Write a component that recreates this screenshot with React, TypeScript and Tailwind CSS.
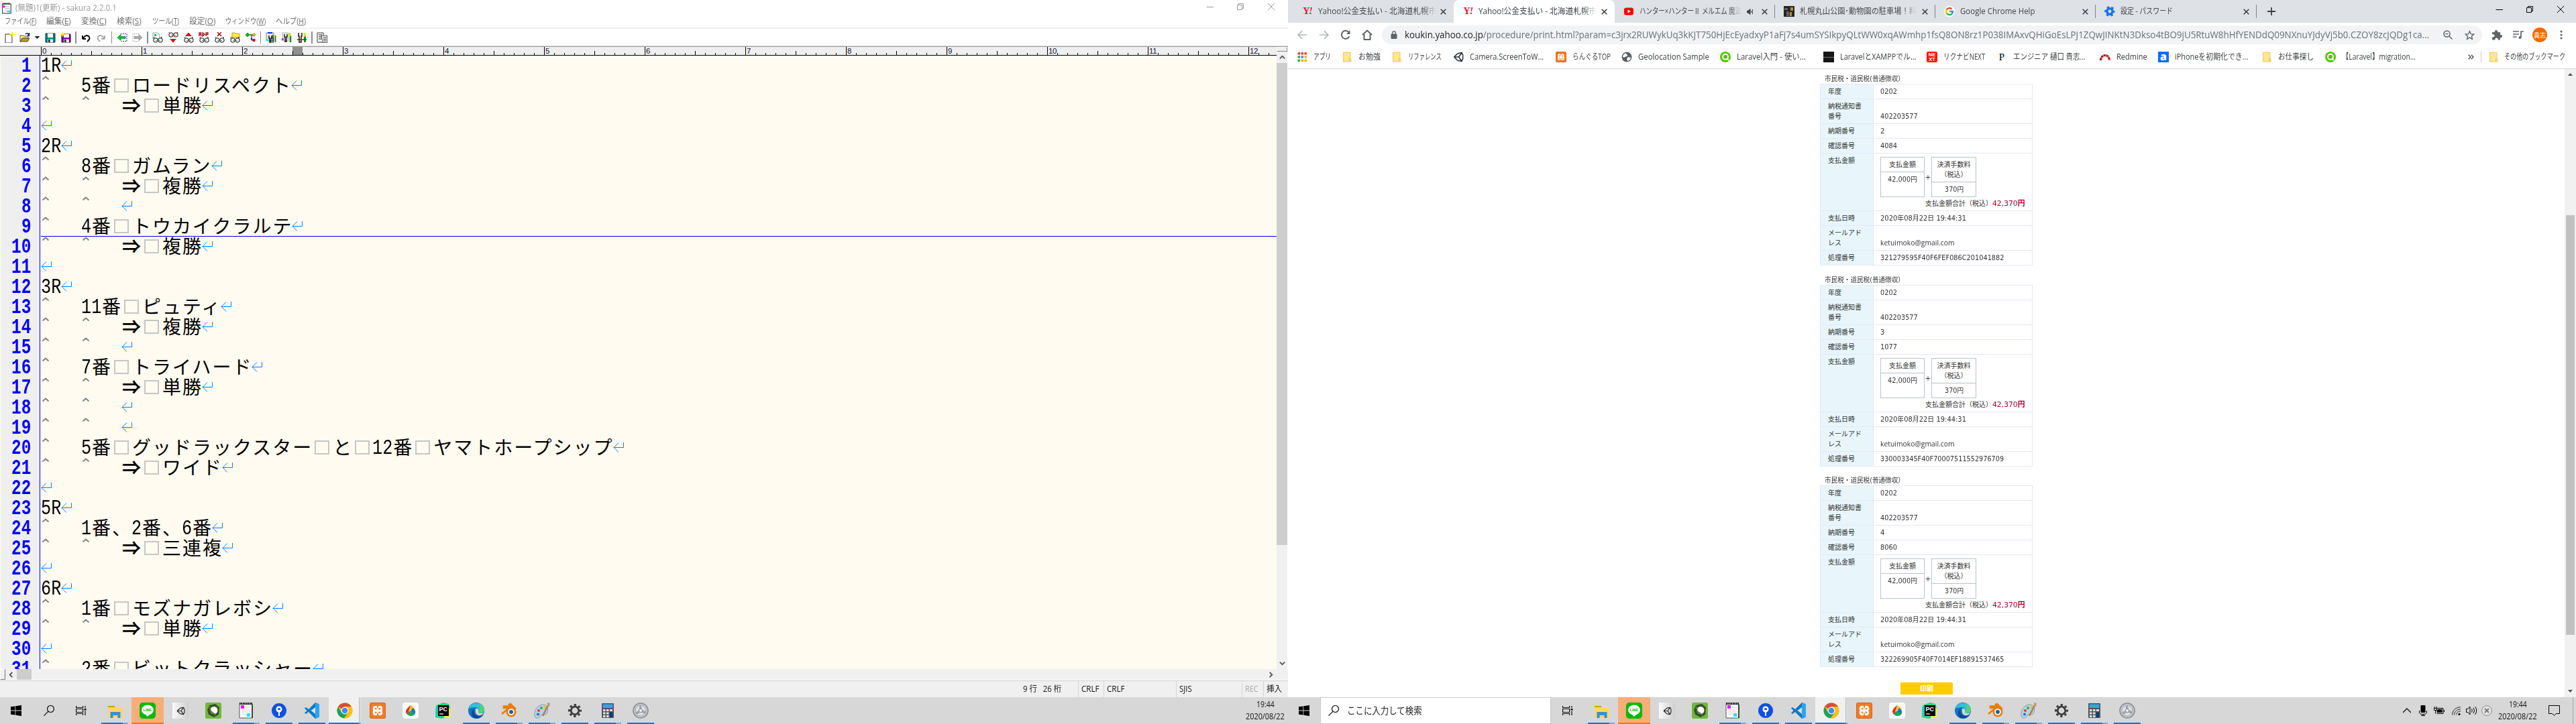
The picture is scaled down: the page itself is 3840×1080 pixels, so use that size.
import { useLayoutEffect, useRef, useState } from "react";
import type { ReactNode } from "react";

/* Text squeezed or stretched horizontally to a known width. */
function Fit({ w, className = "", children }: { w: number; className?: string; children: ReactNode }) {
  const ref = useRef<HTMLSpanElement>(null);
  const [k, setK] = useState(1);
  useLayoutEffect(() => {
    if (ref.current) setK(w / ref.current.offsetWidth);
  }, [w]);
  return (
    <span className={"inline-flex shrink-0 whitespace-nowrap align-top " + className} style={{ width: w }}>
      <span ref={ref} className="block shrink-0 origin-left whitespace-pre" style={{ transform: `scaleX(${k})` }}>
        {children}
      </span>
    </span>
  );
}

const UI = "font-['Open_Sans','Noto_Sans_CJK_JP',sans-serif]";

/* ---------- editor ---------- */

const LINES = [
  "1R", "\t5番□ロードリスペクト", "\t\t⇒□単勝", "", "2R", "\t8番□ガムラン", "\t\t⇒□複勝", "\t\t",
  "\t4番□トウカイクラルテ", "\t\t⇒□複勝", "", "3R", "\t11番□ピュティ", "\t\t⇒□複勝", "\t\t",
  "\t7番□トライハード", "\t\t⇒□単勝", "\t\t", "\t\t", "\t5番□グッドラックスター□と□12番□ヤマトホープシップ",
  "\t\t⇒□ワイド", "", "5R", "\t1番、2番、6番", "\t\t⇒□三連複", "", "6R", "\t1番□モズナガレボシ",
  "\t\t⇒□単勝", "", "\t2番□ビットクラッシャー",
];

function Half({ text }: { text: string }) {
  return (
    <Fit w={text.length * 15} className="h-[30px] font-['Liberation_Mono',monospace] text-[32px] leading-[32px]">
      {text}
    </Fit>
  );
}

function Line({ text, current }: { text: string; current: boolean }) {
  const parts = text.match(/\t|□|⇒|[0-9R]+|[^\t□⇒0-9R]+/g) ?? [];
  return (
    <div className={"flex h-[30px] shrink-0 " + (current ? "shadow-[inset_0_-1px_0_#0000ff]" : "")}>
      {parts.map((p, i) => {
        if (p === "\t")
          return (
            <svg key={i} className="h-[30px] w-[60px] shrink-0" viewBox="0 0 60 30" fill="none" stroke="#808080" strokeWidth="1.9">
              <path d="M2.500 5.500 L7 1.500 L11.500 5.500" />
            </svg>
          );
        if (p === "□")
          return (
            <span key={i} className="flex h-[30px] w-[30px] shrink-0 items-center justify-center pr-px pb-px">
              <span className="h-[21px] w-[22px] border-2 border-[#c6c6c6]" />
            </span>
          );
        if (/^[0-9R]/.test(p)) return <Half key={i} text={p} />;
        return (
          <span
            key={i}
            className={
              "h-[30px] shrink-0 whitespace-nowrap pl-px font-['Noto_Sans_CJK_JP',sans-serif] text-[28px] leading-[26px] tracking-[2px] " +
              (p === "⇒" ? "w-[30px] font-bold" : "-mr-px")
            }
          >
            {p}
          </span>
        );
      })}
      <svg className="h-[30px] w-[17px] shrink-0" viewBox="0 0 17 30" fill="none" stroke="#0080ff">
        <path d="M15.500 7v7.500H1M8 7.500 1 14.500 8 21.500" />
      </svg>
    </div>
  );
}

function Ruler() {
  return (
    <div className="flex h-[13px] overflow-hidden border-b border-black bg-[#efefef]">
      <div className="w-[61px] shrink-0 bg-[#efefef]" />
      {Array.from({ length: 123 }, (_, i) => (
        <div key={i} className={"relative flex w-[15px] shrink-0 items-end " + (i === 25 ? "bg-[#909090]" : "")}>
          <div className={"w-px bg-black " + (i % 10 === 0 ? "h-[12px]" : i % 5 === 0 ? "h-[6px]" : "h-[3px]")} />
          {i % 10 === 0 && (
            <span className="absolute left-[2px] top-0 font-['Liberation_Sans_Narrow','Liberation_Sans',sans-serif] text-[11.5px] leading-[13px] tracking-[-0.4px] text-[#101030]">
              {i / 10}
            </span>
          )}
        </div>
      ))}
    </div>
  );
}

const MENU: [string, string, number, string][] = [
  ["ファイル", "F", 47, "mr-[15px]"], ["編集", "E", 37, "mr-[15px]"], ["変換", "C", 38, "mr-[15px]"], ["検索", "S", 37, "mr-[15.5px]"],
  ["ツール", "T", 40, "mr-[15.5px]"], ["設定", "O", 39, "mr-[15px]"], ["ウィンドウ", "W", 60, "mr-[15px]"], ["ヘルプ", "H", 45, ""],
];

const Eyes = () => (
  <g fill="#fff" stroke="#000" strokeWidth="1">
    <circle cx="5" cy="12" r="3.2" />
    <circle cx="12" cy="12" r="3.2" />
    <path d="M6 12v1M11 12v1M1.5 9l2-2M15 9l-2-2" />
  </g>
);

const TOOLS: Record<string, ReactNode> = {
  new: <><path d="M2 3h7l3 3v10H2z" fill="#fff" stroke="#333" /><path d="M12.500 0v7M9 3.500h7" stroke="#ffe600" strokeWidth="1.500" /></>,
  open: <><path d="M1 5h5l1 1h6v3H5l-3 5H1z" fill="#fff27a" stroke="#555" /><path d="M4 9h11l-3 5H1z" fill="#b8a21c" stroke="#444" /><path d="M9 3q3-3 5 1M14.500 1v4h-3" fill="none" stroke="#00106a" strokeWidth="1.300" /></>,
  save: <><path d="M1 2h14v13H1z" fill="#008080" stroke="#003b3b" /><path d="M4 2h8v6H4z" fill="#fff" /><path d="M4 10.500h8v4.500H4z" fill="#d9f0f0" /><path d="M5 11h2.500v4H5z" fill="#222" /></>,
  saveas: <><path d="M2 3h13v12H2z" fill="#800080" stroke="#330033" /><path d="M5 3h8v5H5z" fill="#fff" /><path d="M5 10.500h8v4.500H5z" fill="#eee" /><path d="M6 11h2.500v4H6z" fill="#222" /><path d="M3.500 0v7M0 3.500h7M1 1l5 5M6 1 1 6" stroke="#ffe600" /></>,
  undo: <path d="M3 10V5M3 10h5M3.500 9.500Q8 3 12 6t-2 8" fill="none" stroke="#000" strokeWidth="2" />,
  redo: <path d="M13 10V5M13 10H8M12.500 9.500Q8 3 4 6t2 8" fill="none" stroke="#aaa" strokeWidth="2" />,
  back: <><path d="M6 2.500h9v11H7" fill="none" stroke="#000" strokeDasharray="1.500 1.500" /><path d="M1 8l5-4.500v3h7v3H6v3z" fill="#00d000" stroke="#064" strokeWidth=".7" /></>,
  fwd: <><path d="M10 2.500H1v11h8" fill="none" stroke="#999" strokeDasharray="1.500 1.500" /><path d="M15 8l-5-4.500v3H3v3h7v3z" fill="#aaa" stroke="#888" strokeWidth=".7" /></>,
  find: <><path d="M1 1h7l3 3v6H1z" fill="#fff" stroke="#999" /><path d="M3 3h3v3H3z" fill="#00c040" /><Eyes /></>,
  down: <><g transform="translate(0,-8)"><Eyes /></g><path d="M3 10h10l-5 5.500z" fill="#e00000" /></>,
  up: <><path d="M3 6h10L8 .5z" fill="#e00000" /><Eyes /></>,
  rep: <><path d="M1 6V1h2.500v2.500H1M3 3.500 4 6M6 .8 9 3.300 6 6zM11 6V1h3v2.500h-3" fill="none" stroke="#a00010" strokeWidth="1.300" /><Eyes /></>,
  clear: <><path d="M5 0l6 6M11 0 5 6" stroke="#b00010" strokeWidth="1.500" /><Eyes /></>,
  grep: <><path d="M4 3V1h4l1 1h6v6H4z" fill="#ffe94a" stroke="#d0a000" /><Eyes /></>,
  tree: <><path d="M4 4h6v8h3M10 4h3" fill="none" stroke="#000" /><path d="M4 .5 7.500 4 4 7.500.5 4z" fill="#00b000" /><circle cx="13.500" cy="4" r="2" fill="#ffe000" stroke="#000" strokeWidth=".5" /><circle cx="13.500" cy="12" r="2.200" fill="#d00000" /><circle cx="10" cy="10" r="1.300" fill="#1010c0" /></>,
  cfg1: <><path d="M1 1h11v12H1z" fill="#e8e8e8" stroke="#888" /><path d="M3 1h7" stroke="#1030ff" strokeWidth="2" /><path d="M5 5v4h1v6h2V9h1V5M11 4v12" fill="none" stroke="#111" strokeWidth="1.500" /><path d="M14.500 5v10" stroke="#109020" strokeWidth="2" /><path d="M12.500 4v4" stroke="#e0d000" strokeWidth="2" /><path d="M1 10h3v3H1z" fill="#0ff" /></>,
  cfg2: <><path d="M2 1h9v12H2z" fill="#f4f4f4" stroke="#aaa" /><path d="M5 3v4h1v7h2V7h1V3" fill="none" stroke="#111" strokeWidth="1.400" /><path d="M14 5v10" stroke="#109020" strokeWidth="2.500" /><path d="M13 1v5" stroke="#e8da00" strokeWidth="3" /><path d="M1 9h3v3H1z" fill="#f0f" /></>,
  cfg3: <><path d="M3 1v5h1v9h3V6h1V1" fill="#eee" stroke="#111" strokeWidth="1.400" /><path d="M12.500 5v10" stroke="#109020" strokeWidth="3" /><path d="M12 1v6" stroke="#e8da00" strokeWidth="3" /><path d="M1 11h14M4 9v4" stroke="#a01010" strokeWidth="1.500" /></>,
  outline: <><path d="M1 1h9v14H1z" fill="#fff" stroke="#333" /><path d="M3 4h5M3 7h5M3 10h5" stroke="#000" /><path d="M7 5h8.500v10.500H9z" fill="#eee" stroke="#555" /><path d="M10 8h4M10 10.500h4M10 13h4" stroke="#333" /></>,
};

const TOOL_GROUPS = [["undo", "redo"], ["back", "fwd"], ["find", "down", "up", "rep", "clear", "grep", "tree"], ["cfg1", "cfg2", "cfg3"], ["outline"]];

function Tool({ id }: { id: string }) {
  return (
    <span className="flex w-[23px] shrink-0 justify-center">
      <svg className="h-4 w-4" viewBox="0 0 16 16">{TOOLS[id]}</svg>
    </span>
  );
}

function WindowButtons({ color }: { color: string }) {
  return (
    <div className={"flex items-center " + color}>
      <svg className="h-3 w-3" viewBox="0 0 12 12" stroke="currentColor"><path d="M.5 6.500h10.500" /></svg>
      <svg className="ml-[33px] h-3 w-3" viewBox="0 0 12 12" fill="none" stroke="currentColor"><path d="M1.500 3.500h7v7h-7zM3.500 3V1.500h7v7H9" /></svg>
      <svg className="ml-[34px] h-3 w-3" viewBox="0 0 12 12" stroke="currentColor"><path d="M.8.800 11.200 11.200M11.200.800.800 11.200" /></svg>
    </div>
  );
}

function Chevron({ d, className }: { d: string; className: string }) {
  return (
    <svg className={className} viewBox="0 0 10 10" fill="none" stroke="#505050" strokeWidth="2"><path d={d} /></svg>
  );
}

const STATUS: [string, number, string, string][] = [
  ["CRLF", 26, "w-[38px]", "text-[#111]"], ["CRLF", 26, "w-[108px]", "text-[#111]"], ["SJIS", 19, "w-[98px]", "text-[#111]"],
  ["REC", 20, "w-[32px]", "text-[#a8a8a8]"], ["挿入", 23, "w-[37px]", "text-[#111]"],
];

function Editor() {
  return (
    <section className={"flex h-[1040px] w-[1920px] flex-col bg-white " + UI}>
      <div className="flex h-[23px] items-center pl-[3px] pr-[19px]">
        <svg className="mt-px h-[17px] w-[14px]" viewBox="0 0 14 17">
          <path d="M.7 2h12.500v14H.7z" fill="#fff" stroke="#222" />
          <path d="M1 1.200h12" stroke="#000" strokeWidth="2" strokeDasharray="1 1" />
          <path d="M4 6h7M4 8.500h7M4 11h4" stroke="#bbb" />
          <path d="M2 3l3 3-2 2-2-2z" fill="#f0f" />
          <path d="M7 12h3v-2l3 3-3 3v-2H7z" fill="#0ee" />
        </svg>
        <Fit w={151} className="ml-[6px] text-[12px] leading-[18px] text-[#999]">(無題)1(更新) - sakura 2.2.0.1</Fit>
        <div className="-mt-1 ml-auto"><WindowButtons color="text-[#999]" /></div>
      </div>
      <div className="flex h-[18px] items-center pl-[7px] text-[12px] leading-[18px] text-[#6d6d6d]">
        {MENU.map(([t, k, w, m]) => (
          <Fit key={t} w={w} className={m}>{t}(<span className="underline">{k}</span>)</Fit>
        ))}
      </div>
      <div className="h-[2px] bg-[#f0f0f0]" />
      <div className="flex h-[25px] items-center pl-[2px] pt-px">
        <Tool id="new" />
        <Tool id="open" />
        <svg className="mx-[3px] h-2 w-[9px] shrink-0" viewBox="0 0 9 8"><path d="M.5 2h8l-4 4z" fill="#222" /></svg>
        <Tool id="save" />
        <Tool id="saveas" />
        {TOOL_GROUPS.map((g, i) => (
          <div key={i} className="flex items-center">
            <span className="mx-[3px] h-[18px] w-[1.500px] bg-[#8c8c8c]" />
            {g.map((t) => <Tool key={t} id={t} />)}
          </div>
        ))}
      </div>
      <div className="h-px bg-[#dcdcdc]" />
      <div className="h-px bg-[#989898]" />
      <div className="flex h-[928px] border-l border-[#989898]">
        <div className="-ml-px flex w-[1903px] flex-col overflow-hidden">
          <Ruler />
          <div className="flex h-[915px] overflow-hidden bg-[#fffbf0]">
            <div className="ml-px flex w-[58px] shrink-0 flex-col items-end bg-[#efefef] pr-[13px] text-[#0000ff]">
              {LINES.map((_, i) => (
                <Fit key={i} w={String(i + 1).length * 14.5} className="h-[30px] font-['Liberation_Mono',monospace] text-[32px] font-bold leading-[32px]">
                  {i + 1}
                </Fit>
              ))}
            </div>
            <div className="w-px shrink-0 bg-[#0000ff]" />
            <div className="flex flex-1 flex-col pl-px text-black">
              {LINES.map((l, i) => <Line key={i} text={l} current={i === 8} />)}
            </div>
          </div>
        </div>
        <div className="flex w-[16px] flex-col items-center bg-[#f0f0f0]">
          <div className="h-[7px] w-full border border-[#888] border-l-white border-t-white bg-[#f0f0f0]" />
          <Chevron d="M1 7 5 3l4 4" className="my-[4px] h-[9px] w-[9px]" />
          <div className="h-[719px] w-full bg-[#cdcdcd]" />
          <Chevron d="M1 3 5 7l4-4" className="mb-1 mt-auto h-[9px] w-[9px]" />
        </div>
      </div>
      <div className="flex h-[17px] items-center border-b border-white bg-[#f0f0f0]">
        <div className="h-full w-[8px] border border-[#777] border-l-white border-t-white" />
        <Chevron d="M7 1 3 5l4 4" className="ml-[4px] h-[9px] w-[9px]" />
        <div className="ml-[4px] h-full w-[22px] bg-[#cdcdcd]" />
        <Chevron d="M3 1l4 4-4 4" className="ml-auto mr-[21px] h-[9px] w-[9px]" />
      </div>
      <div className="flex flex-1 items-stretch border-t border-[#d0d0d0] bg-[#f0f0f0] text-[12px] leading-[24px] text-[#111]">
        <div className="w-[1607px] pl-[1525px]">
          <Fit w={57}>9 行   26 桁</Fit>
        </div>
        {STATUS.map(([t, w, cell, color], i) => (
          <div key={i} className={"border-l border-[#d4d4d4] pl-[4px] " + cell + " " + color}><Fit w={w}>{t}</Fit></div>
        ))}
      </div>
    </section>
  );
}

/* ---------- shared logos ---------- */

const Xampp = () => (
  <svg viewBox="0 0 24 24" className="h-full w-full">
    <rect width="24" height="24" rx="3" fill="#d9601a" /><rect x="1" y="1" width="22" height="22" rx="2" fill="#f27b26" />
    <g fill="none" stroke="#fff" strokeWidth="3">
      <path d="M12 12H8.500a2.900 2.900 0 1 1 3.500-3.200zM12 12h3.500a2.900 2.900 0 1 0-3.500-3.200zM12 12H8.500a2.900 2.900 0 1 0 3.500 3.200zM12 12h3.500a2.900 2.900 0 1 1-3.500 3.200z" />
    </g>
    <path d="M12 4.500v3.500M12 16v3.500" stroke="#f27b26" strokeWidth="2" />
  </svg>
);
const UnityMark = ({ color }: { color: string }) => (
  <svg viewBox="0 0 24 24" className="h-full w-full" fill="none" stroke={color} strokeWidth="2.200">
    <path d="M2 12 11 4M2 12l9 8M2 12h11M13 12l6-9M13 12l6 9M11 4l8.500-1.500L22 8v8l-2.500 5.500L11 20" />
  </svg>
);
const Chrome = () => (
  <svg viewBox="0 0 24 24" className="h-full w-full">
    <circle cx="12" cy="12" r="11.500" fill="#fbc116" />
    <path d="M12 12 2 6.300A11.500 11.500 0 0 1 22 6.300H12z" fill="#dd4b3e" />
    <path d="M2 6.300A11.500 11.500 0 0 0 11 23.500L17 15 7 14.500z" fill="#1aa260" />
    <path d="M12 6.500h10A11.500 11.500 0 0 1 11 23.500l6-9z" fill="#fbc116" />
    <circle cx="12" cy="12" r="5.400" fill="#fff" /><circle cx="12" cy="12" r="4.300" fill="#4688f4" />
  </svg>
);
const Folder = () => (
  <svg viewBox="0 0 16 16" className="h-full w-full"><path d="M2.500 1h10.500v9l1 1.500V15H2.500z" fill="#ffe694" stroke="#e8c860" /><path d="M11.500 14.500v-4h1.500" fill="none" stroke="#e8c04c" /></svg>
);
const Green = () => (
  <svg viewBox="0 0 16 16" className="h-full w-full"><circle cx="8" cy="8" r="8" fill="#55c500" /><circle cx="8" cy="7.800" r="4" fill="none" stroke="#fff" strokeWidth="2" /><path d="M10 10l3 3" stroke="#fff" strokeWidth="2" /></svg>
);

/* ---------- taskbar ---------- */

const WinLogo = () => (
  <svg viewBox="0 0 16 16" className="h-4 w-4"><path d="M0 2.300 6.500 1.400v6.200H0zM7.300 1.300 16 0v7.600H7.300zM0 8.400h6.500v6.200L0 13.700zM7.300 8.400H16V16l-8.700-1.300z" /></svg>
);
const Search = () => (
  <svg viewBox="0 0 16 16" className="h-4 w-4" fill="none" stroke="#111" strokeWidth="1.200"><circle cx="10.500" cy="5.500" r="5" /><path d="M7 9.200.5 15.700" /></svg>
);
const TaskView = () => (
  <svg viewBox="0 0 16 16" className="h-4 w-4" fill="none" stroke="#111" strokeWidth="1.200"><path d="M.6 1v2.500h10V1M.6 15v-2.500h10V15M.6 5.500h10v5H.6zM14 1v3M14 8.500V15" /><path d="M12.500 5h3v2.500h-3z" fill="#111" stroke="none" /></svg>
);

const APPS: { icon: ReactNode; bar: string }[] = [
  {
    bar: "full-orange",
    icon: <svg viewBox="0 0 24 24" className="h-6 w-6"><rect width="24" height="24" rx="5" fill="#00b900" /><ellipse cx="12" cy="11" rx="9" ry="7.500" fill="#fff" /><path d="M8 17l4 4 4-4z" fill="#fff" /><text x="12" y="13" fontSize="5.500" fontWeight="bold" textAnchor="middle" fill="#00b900" fontFamily="Liberation Sans">LINE</text></svg>,
  },
  { bar: "", icon: <span className="flex h-6 w-6 items-center justify-center bg-gradient-to-r from-[#fafafa] to-[#cfcfcf]"><span className="h-[13px] w-[13px]"><UnityMark color="#222" /></span></span> },
  { bar: "", icon: <svg viewBox="0 0 24 24" className="h-6 w-6"><rect width="24" height="24" rx="2.500" fill="#72b83c" /><path d="M6 4l9-2 6 5-1 11-7 4-8-4-2-7z" fill="#35502c" /><circle cx="13" cy="11.500" r="5.500" fill="#fff" /><path d="M6 5l2 8 8 6" fill="none" stroke="#4c7a34" strokeWidth="2" /></svg> },
  { bar: "split", icon: <svg viewBox="0 0 24 24" className="h-6 w-6"><path d="M2 2.500h19V23H2z" fill="#fff" stroke="#555" /><path d="M2 1.500h19" stroke="#000" strokeWidth="3" strokeDasharray="1.500 1" /><path d="M21 3v20" stroke="#222" strokeWidth="1.500" /><path d="M10 7h8M5 11h13M5 14h13M5 17h6" stroke="#ccc" /><path d="M4 4h5v5H4zM5 9h4" fill="#f0f" /><path d="M13 16h5v5h-5z" fill="#0ee" /></svg> },
  { bar: "solid", icon: <svg viewBox="0 0 24 24" className="h-6 w-6"><circle cx="12" cy="12" r="11" fill="#0b52e0" /><circle cx="12" cy="10" r="4.500" fill="#fff" /><circle cx="12" cy="10" r="2" fill="#0b52e0" /><path d="M12 11v9" stroke="#fff" strokeWidth="2" /></svg> },
  { bar: "solid", icon: <svg viewBox="0 0 24 24" className="h-6 w-6"><path d="M17 0 7 10 3 7 1 8.500 4.500 12 1 15.500 3 17l4-3 10 10 6-2.500v-19z" fill="#0a79c8" /><path d="M17 0v24l6-2.500v-19z" fill="#2aa4f0" /><path d="M17 7v10l-6.500-5z" fill="#dedede" /></svg> },
  { bar: "chrome", icon: <span className="h-6 w-6"><Chrome /></span> },
  { bar: "", icon: <span className="h-6 w-6"><Xampp /></span> },
  { bar: "", icon: <svg viewBox="0 0 24 24" className="h-6 w-6"><rect width="24" height="24" rx="4" fill="#fafafa" /><path d="M12 4C7 8 5 11 5 14a7 7 0 0 0 4 5z" fill="#f02a20" /><path d="M9 19C5 16 11 11 18 11c3 4 0 9-5 9-2 0-3-.3-4-1z" fill="#14a860" /><path d="M12 4c4 2 6 4 7 8-6-3-9 0-11 4z" fill="#f8c020" /><path d="M15 8c3 2 5 5 3 9l-5-5z" fill="#1870d8" /></svg> },
  { bar: "", icon: <svg viewBox="0 0 24 24" className="h-6 w-6"><path d="M1 4 12 0l8 2 3 8-2 12-12 2-9-2z" fill="#21d789" /><path d="M14 5l9 4-1 13-9 2z" fill="#e9f04a" /><path d="M0 22V8l5-4z" fill="#07c3f2" opacity=".5" /><rect x="4" y="4" width="16" height="16" fill="#000" /><text x="5.500" y="13" fontSize="9" fontWeight="bold" fill="#fff" fontFamily="Liberation Sans">PC</text><path d="M6 17h6" stroke="#fff" strokeWidth="1.300" /></svg> },
  { bar: "solid", icon: <svg viewBox="0 0 24 24" className="h-6 w-6"><circle cx="12" cy="12" r="12" fill="#1172c8" /><path d="M1 9C3-1 20-3 24 9c1 5-3 8-9 6 2-5-1-8-5-8S3 8 1 9z" fill="#2fc3d4" /><path d="M17 2c5 2 8 8 6 11-2 4-7 3-8 2 4-5 3-9 2-13z" fill="#58d26a" /><path d="M9 10c-2 5 2 11 9 10l4-1c-6 7-16 6-17-2-.5-4 1-6 4-7z" fill="#0b4a94" /><path d="M11 9c5-1 5 4 4 6 3 2 6 1 8-.5C22 19 15 21 12 17c-2-3-1-6-1-8z" fill="#d6d6d6" /></svg> },
  { bar: "split", icon: <svg viewBox="0 0 24 24" className="h-6 w-6"><path d="M1 17 12 8H4V5.500h10L12 3l2-1 8 8" fill="none" stroke="#e87d0d" strokeWidth="2.600" /><circle cx="15" cy="14" r="7.500" fill="#e87d0d" /><circle cx="15" cy="14" r="4.800" fill="#fff" /><circle cx="15" cy="14" r="3" fill="#225f9c" /></svg> },
  { bar: "split", icon: <svg viewBox="0 0 24 24" className="h-6 w-6"><path d="M2 22C-2 15 4 4 13 3c6 0 9 5 7 11-2 7-6 2-9 4-2 4-6 7-9 4z" fill="#b4d3e4" stroke="#7aa0b6" /><circle cx="7" cy="12" r="2" fill="#e04030" /><circle cx="11" cy="8" r="2" fill="#40a848" /><circle cx="16" cy="7.500" r="1.800" fill="#f0c020" /><circle cx="6" cy="17.500" r="2" fill="#4060c8" /><path d="M22 2 13 20" stroke="#b87a3c" strokeWidth="2.400" /><path d="M20 0l4 1-1 5-3-1z" fill="#c99a62" /></svg> },
  { bar: "solid", icon: <svg viewBox="0 0 24 24" className="h-6 w-6"><circle cx="12" cy="12" r="8.500" fill="none" stroke="#3c3c3c" strokeWidth="3" strokeDasharray="3.340 3.340" strokeDashoffset="1.670" /><circle cx="12" cy="12" r="5.800" fill="none" stroke="#3c3c3c" strokeWidth="2.800" /></svg> },
  { bar: "split", icon: <svg viewBox="0 0 24 24" className="h-6 w-6"><rect x="3" y="1" width="18" height="22" rx="1" fill="#4d5560" /><path d="M4.500 2.500h15V8h-15z" fill="#2ea8e8" /><path d="M5 10h3.500v3H5zM10 10h3.500v3H10zM5 14.500h3.500v3H5zM10 14.500h3.500v3H10zM5 19h3.500v3H5zM10 19h3.500v3H10z" fill="#dfe3e8" /><path d="M15 10h4v3h-4z" fill="#dfe3e8" /><path d="M15 14.500h4V22h-4z" fill="#0b3c74" /></svg> },
  { bar: "solid", icon: <svg viewBox="0 0 24 24" className="h-6 w-6"><circle cx="12" cy="12" r="11" fill="#c4c8cb" stroke="#868b90" strokeWidth="1.500" /><circle cx="12" cy="12" r="8" fill="#dcdfe1" stroke="#a3a8ac" /><path d="M12 12C9 8 10 5 12 4c2 2 2 5 0 8zM12 12c5-1 8 1 7.500 4-3 1-6-1-7.500-4zM12 12c-2 5-5 6-7.500 4 1-3 4-4 7.500-4z" fill="#9aa0a5" /><circle cx="12" cy="12" r="2.600" fill="#f5f5f5" stroke="#7e848a" /></svg> },
];

function Bar({ kind }: { kind: string }) {
  if (kind === "full-orange") return <div className="absolute bottom-0 left-0 h-[2px] w-[48px] bg-[#ff7200]" />;
  if (kind === "chrome") return <div className="absolute bottom-0 left-0 flex h-[2px] w-[48px] bg-[#0078d7]"><div className="ml-auto w-[3px] bg-[#5aa9e6]" /></div>;
  if (kind === "split") return <div className="absolute bottom-0 left-[4px] flex h-[2px] w-[40px] bg-[#0078d7]"><div className="ml-auto w-[8px] bg-[#66b0ea]" /></div>;
  if (kind === "solid") return <div className="absolute bottom-0 left-[4px] h-[2px] w-[40px] bg-[#0078d7]" />;
  return null;
}

function Apps() {
  return (
    <div className="flex">
      <div className="relative flex h-[40px] w-[49px] items-center justify-center">
        <svg viewBox="0 0 24 24" className="mt-px h-6 w-6">
          <path d="M1 4h10v3H1z" fill="#d69a12" /><path d="M1 6h22v15H1z" fill="#ffd666" /><path d="M4.500 22v-9h15v9h-4v-4h-7v4z" fill="#3a8fd0" />
        </svg>
        <Bar kind="split" />
      </div>
      {APPS.map((a, i) => (
        <div
          key={i}
          className={
            "relative flex h-[40px] w-[49px] items-center justify-center pr-px " +
            (i === 0 ? "border-r border-[#d7d7d7] bg-[#f7ae78]" : i === 6 ? "border-r-[3px] border-[#dadada] bg-[#f0f0f0] pl-[2px] shadow-[inset_-1px_0_0_#bdbdbd]" : "")
          }
        >
          {a.icon}
          <Bar kind={a.bar} />
        </div>
      ))}
    </div>
  );
}

function Clock() {
  return (
    <div className={"flex flex-col items-center text-[12px] leading-[18px] text-[#111] " + UI}>
      <Fit w={27}>19:44</Fit>
      <Fit w={58}>2020/08/22</Fit>
    </div>
  );
}

function TaskbarLeft() {
  return (
    <div className="flex h-[40px] w-[1920px] items-center bg-[#d7d7d7]">
      <span className="flex w-[49px] justify-center pr-[2px]"><WinLogo /></span>
      <span className="flex w-[49px] justify-center pr-[2px]"><Search /></span>
      <span className="flex w-[49px] justify-center pr-[4px]"><TaskView /></span>
      <Apps />
      <div className="ml-auto mr-[5px]"><Clock /></div>
    </div>
  );
}

function TaskbarRight() {
  return (
    <div className={"flex h-[40px] w-[1920px] items-center bg-[#d7d7d7] " + UI}>
      <span className="flex w-[48px] shrink-0 justify-center"><WinLogo /></span>
      <div className="flex h-[40px] w-[344px] shrink-0 items-center border border-[#c8c8c8] bg-white pl-[11px]">
        <Search />
        <Fit w={112} className="ml-[12px] text-[14px] leading-5 text-[#222]">ここに入力して検索</Fit>
      </div>
      <span className="flex w-[51px] shrink-0 justify-center pr-[2px]"><TaskView /></span>
      <div className="shrink-0"><Apps /></div>
      <div className="ml-auto flex items-center">
        <svg className="h-3 w-3" viewBox="0 0 12 12" fill="none" stroke="#111" strokeWidth="1.300"><path d="M0 9l6-6 6 6" /></svg>
        <svg className="ml-[12px] h-4 w-[12px]" viewBox="0 0 12 16"><rect x="2.500" y="0" width="7" height="11" rx="1" /><path d="M.6 8v3.500l1.800 1.800h7.200l1.800-1.800V8M6 13v2.500M3 15.500h6" fill="none" stroke="#000" /></svg>
        <svg className="ml-[10px] h-3 w-[16px]" viewBox="0 0 16 12"><path d="M4.500 2.500H14v8H4.500M15.500 5v3M1 0v2M4 0v2M.5 2.500h4v3h-4zM2.500 6v4.500" fill="none" stroke="#000" /><path d="M6 4h6.500v5H4.500V7z" /></svg>
        <svg className="ml-[11px] h-[13px] w-[13px]" viewBox="0 0 13 13" fill="none" stroke="#222"><path d="M.5 12.500C.5 6 6 .8 13 .8M3.500 12.500C3.500 8 7.500 4 13 4M6.500 12.500C6.500 9.500 9 7 13 7" /><circle cx="11" cy="11.500" r="1.300" fill="#000" /></svg>
        <svg className="ml-[8px] h-[14px] w-[17px]" viewBox="0 0 17 14" fill="none" stroke="#000"><path d="M.5 4.500h2.500l3-3.500v12l-3-3.500H.5zM8.500 4.500q1.500 2.500 0 5M11 3q3 4 0 8M13.500 1q4.500 6 0 12" /></svg>
        <svg className="ml-[6px] h-4 w-4" viewBox="0 0 16 16" fill="none"><circle cx="8" cy="8" r="7.400" fill="#e4e4e4" stroke="#8a8a8a" /><path d="M5 5l6 6M11 5l-6 6" stroke="#7d7d7d" strokeWidth="2.200" /></svg>
        <div className="ml-[9px]"><Clock /></div>
        <svg className="ml-[17px] h-[16px] w-[17px]" viewBox="0 0 17 16" fill="none" stroke="#000"><path d="M.5.500h16v12h-5l-3 2.800-3-2.800h-5z" /></svg>
        <div className="ml-[19px] mr-[4px] h-[40px] w-px bg-[#a8a8a8]" />
      </div>
    </div>
  );
}

/* ---------- browser ---------- */

const Yahoo = () => <span className="w-4 text-center font-['Liberation_Serif',serif] text-[14px] font-black leading-4 tracking-[-1px] text-[#ff0033]">Y<i>!</i></span>;
const X = () => <svg className="h-[9px] w-[9px] shrink-0" viewBox="0 0 9 9" stroke="#3c4043" strokeWidth="1.600"><path d="M.7.700 8.300 8.300M8.300.700.700 8.300" /></svg>;

const Gear = () => (
  <svg viewBox="0 0 16 16" className="h-4 w-4"><circle cx="8" cy="8" r="4.200" fill="none" stroke="#1a73e8" strokeWidth="3.600" /><circle cx="8" cy="8" r="6.500" fill="none" stroke="#1a73e8" strokeWidth="2.600" strokeDasharray="3.400 3.400" strokeDashoffset="1.700" /></svg>
);
const Google = () => (
  <svg viewBox="0 0 16 16" className="h-4 w-4"><circle cx="8" cy="8" r="8" fill="#fff" /><g fill="none" strokeWidth="2.400"><path d="M11.500 4.500A5 5 0 0 0 3.700 5.500" stroke="#ea4335" /><path d="M3.700 5.500a5 5 0 0 0 0 5" stroke="#fbbc05" /><path d="M3.700 10.500a5 5 0 0 0 7.600 1.300" stroke="#34a853" /><path d="M11.300 11.800A5 5 0 0 0 13 8H8.200" stroke="#4285f4" /></g></svg>
);

function Tab({ icon, title, w, active, audio, sep, fade }: { icon: ReactNode; title: string; w: number; active?: boolean; audio?: boolean; sep?: boolean; fade?: boolean }) {
  return (
    <div className={"relative flex h-[34px] w-[239.300px] shrink-0 items-center pl-[13px] " + (active ? "rounded-t-[8px] bg-white" : "")}>
      {icon}
      <Fit w={w} className={"ml-[8px] text-[12px] leading-[18px] " + (active ? "text-[#3c4043] " : "text-[#45494d] ") + (fade ? "[mask-image:linear-gradient(to_right,black_88%,transparent)]" : "")}>
        {title}
      </Fit>
      <div className="ml-auto mr-[11px] flex items-center gap-[12px]">
        {audio && <svg className="h-[9px] w-[10px]" viewBox="0 0 10 9" fill="none" stroke="#444"><path d="M.3 3H2l3-2.500v8L2 6H.3z" fill="#444" /><path d="M6.500 3v3M8.500 1v7" /></svg>}
        <X />
      </div>
      {sep && <div className="absolute right-0 top-[7px] h-[20px] w-px bg-[#80868b]" />}
    </div>
  );
}

const BOOKMARKS: { icon: ReactNode; t: string; w: number; cell: string }[] = [
  { t: "アプリ", w: 26, cell: "w-[67px]", icon: <svg viewBox="0 0 16 16" className="h-4 w-4"><path d="M1.500 1h3.500v3.500H1.500zM6.500 1H10v3.500H6.500zM11.500 1H15v3.500h-3.500z" fill="#ea4335" /><path d="M1.500 6.200h3.500v3.500H1.500z" fill="#34a853" /><path d="M6.500 6.200H10v3.500H6.500z" fill="#4285f4" /><path d="M11.500 6.200H15v3.500h-3.500zM6.500 11.500H10V15H6.500zM11.500 11.500H15V15h-3.500z" fill="#fbae05" /><path d="M1.500 11.500h3.500V15H1.500z" fill="#34a853" /></svg> },
  { t: "お勉強", w: 33, cell: "w-[74px]", icon: <Folder /> },
  { t: "リファレンス", w: 50, cell: "w-[92px]", icon: <Folder /> },
  { t: "Camera.ScreenToW...", w: 110, cell: "w-[153px]", icon: <UnityMark color="#222c37" /> },
  { t: "らんぐるTOP", w: 57, cell: "w-[98px]", icon: <Xampp /> },
  { t: "Geolocation Sample", w: 106, cell: "w-[147px]", icon: <svg viewBox="0 0 16 16" className="h-4 w-4"><circle cx="8" cy="8" r="7.500" fill="#5a5f64" /><path d="M7 2c-1 2 3 2 2 4s-4 1-5 3l-2-1.500C2 5 4 3 7 2zM10 8l4 1c-.5 3-2.500 4.500-5 5 0-2-2-3 1-6z" fill="#fff" /></svg> },
  { t: "Laravel入門 - 使い...", w: 103, cell: "w-[154px]", icon: <Green /> },
  { t: "LaravelとXAMPPでル...", w: 113, cell: "w-[154px]", icon: <span className="flex h-4 w-4 items-center bg-[#161616]"><span className="h-px w-full bg-[#777]" /></span> },
  { t: "リクナビNEXT", w: 62, cell: "w-[104px]", icon: <svg viewBox="0 0 16 16" className="h-4 w-4"><rect width="16" height="16" rx="2" fill="#ff1100" /><text x="8" y="7.300" fontSize="7.500" fontWeight="bold" textAnchor="middle" fill="#fff" fontFamily="Liberation Sans">NE</text><text x="8" y="14.300" fontSize="7.500" fontWeight="bold" textAnchor="middle" fill="#fff" fontFamily="Liberation Sans">XT</text></svg> },
  { t: "エンジニア 樋口 貴志...", w: 108, cell: "w-[154px]", icon: <span className="block text-center font-['Liberation_Serif',serif] text-[15px] leading-4 text-black">P</span> },
  { t: "Redmine", w: 46, cell: "w-[87px]", icon: <svg viewBox="0 0 16 16" className="h-4 w-4"><path d="M1.500 13A6.500 7.500 0 0 1 14.500 13" fill="none" stroke="#b3161b" strokeWidth="3.200" strokeDasharray="3.600 .6" /></svg> },
  { t: "iPhoneを初期化でき...", w: 109, cell: "w-[154px]", icon: <span className="flex h-4 w-4 items-center justify-center bg-[#0e6bff] pb-[2px] text-[16px] font-extrabold leading-none text-white">a</span> },
  { t: "お仕事探し", w: 53, cell: "w-[95px]", icon: <Folder /> },
  { t: "【Laravel】migration...", w: 110, cell: "w-[160px]", icon: <Green /> },
];

const RECORDS = [
  { period: "2", check: "4084", id: "321279595F40F6FEF086C201041882", gap: "" },
  { period: "3", check: "1077", id: "330003345F40F70007511552976709", gap: "mt-[14px]" },
  { period: "4", check: "8060", id: "322269905F40F7014EF18891537465", gap: "mt-[13px]" },
];

const NUM = "font-['DejaVu_Sans','Noto_Sans_CJK_JP',sans-serif]";

function Row({ label, h, children, end }: { label: ReactNode; h: string; children: ReactNode; end?: boolean }) {
  return (
    <div className={"flex border-b border-[#e6e6fa] " + h}>
      <div className="w-[79px] shrink-0 border-r border-[#e6e6fa] bg-[#e8f6fc] pl-[11px] pt-[3px]">{label}</div>
      <div className={"flex flex-1 flex-col pl-[10px] pt-[3px] " + (end ? "justify-end pb-[3px]" : "")}>{children}</div>
    </div>
  );
}

function Record({ r }: { r: (typeof RECORDS)[number] }) {
  return (
    <div className={"w-[317px] text-[10px] leading-[15px] text-[#333] " + NUM + " " + r.gap}>
      <div className="flex h-[15px] items-center pl-[7px]"><Fit w={119}>市民税・道民税(普通徴収）</Fit></div>
      <div className="border-x border-t border-[#e6e6fa]">
        <Row label="年度" h="h-[22px]"><Fit w={24.5}>0202</Fit></Row>
        <Row label={<>納税通知書<br />番号</>} h="h-[37px]" end><Fit w={55.5}>402203577</Fit></Row>
        <Row label="納期番号" h="h-[22px]"><Fit w={6.1}>{r.period}</Fit></Row>
        <Row label="確認番号" h="h-[22px]"><Fit w={24.5}>{r.check}</Fit></Row>
        <Row label="支払金額" h="h-[86px]">
          <div className="mt-[2px] flex h-[60px] items-center text-center">
            <div className="h-[60px] w-[66px] border border-[#b5c4cd]">
              <div className="h-[22px] border-b border-[#b5c4cd] pt-[3px]">支払金額</div>
              <div className="pt-[3px]"><Fit w={44}>42,000円</Fit></div>
            </div>
            <span className="w-[10px]">+</span>
            <div className="h-[60px] w-[67px] border border-[#b5c4cd]">
              <div className="h-[37px] border-b border-[#b5c4cd] pt-[3px]">決済手数料<br />（税込）</div>
              <div className="pt-[3px]"><Fit w={28}>370円</Fit></div>
            </div>
          </div>
          <div className="flex items-center justify-end pr-[10px] pt-[2px]">
            <Fit w={100}>支払金額合計（税込）</Fit>
            <Fit w={49} className="text-[11px] text-[#a5002c]">42,370<b>円</b></Fit>
          </div>
        </Row>
        <Row label="支払日時" h="h-[22px]"><Fit w={128}>2020年08月22日 19:44:31</Fit></Row>
        <Row label={<>メールアド<br />レス</>} h="h-[37px]" end><Fit w={111} className="font-['Open_Sans',sans-serif]">ketuimoko@gmail.com</Fit></Row>
        <Row label="処理番号" h="h-[22px]"><Fit w={184.500}>{r.id}</Fit></Row>
      </div>
    </div>
  );
}

const I = "h-4 w-4 shrink-0";

function Browser() {
  return (
    <section className={"flex h-[1040px] w-[1920px] flex-col bg-white " + UI}>
      <div className="flex h-[34px] items-center bg-[#dee1e6] pl-[8px]">
        <Tab icon={<Yahoo />} title="Yahoo!公金支払い - 北海道札幌市" w={176} fade />
        <Tab icon={<Yahoo />} title="Yahoo!公金支払い - 北海道札幌市" w={176} active fade />
        <Tab icon={<svg viewBox="0 0 16 16" className={I}><rect x="1" y="2.500" width="14" height="11" rx="3" fill="#f00" /><path d="M6.500 5.500v5L11 8z" fill="#fff" /></svg>} title="ハンター×ハンターⅡ メルエム 魔法" w={152} audio sep fade />
        <Tab icon={<svg viewBox="0 0 16 16" className={I}><path d="M0 0h16v16H0z" fill="#20272b" /><path d="M1 3h5v3H1zM4 8h4v7H4z" fill="#5a656c" /><path d="M10 2h4v5h-4zM9 9h3v6H9z" fill="#c8862e" /></svg>} title="札幌丸山公園･動物園の駐車場！料" w={174} sep fade />
        <Tab icon={<Google />} title="Google Chrome Help" w={112} sep />
        <Tab icon={<Gear />} title="設定 - パスワード" w={78} sep />
        <svg className="ml-[16px] h-[12px] w-[12px]" viewBox="0 0 12 12" stroke="#3c4043" strokeWidth="1.800"><path d="M6 0v12M0 6h12" /></svg>
        <div className="-mt-[6px] ml-auto mr-[17px]"><WindowButtons color="text-black" /></div>
      </div>
      <div className="flex h-[36px] shrink-0 items-center pl-[13px]">
        <svg className={I} viewBox="0 0 16 16" fill="none" stroke="#b4b7ba" strokeWidth="1.700"><path d="M15 8H2M8 2 2 8l6 6" /></svg>
        <svg className={I + " ml-[17px]"} viewBox="0 0 16 16" fill="none" stroke="#b4b7ba" strokeWidth="1.700"><path d="M1 8h13M8 2l6 6-6 6" /></svg>
        <svg className={I + " ml-[16px]"} viewBox="0 0 16 16" fill="none" stroke="#5f6368" strokeWidth="2"><path d="M13.500 10A6 6 0 1 1 12.500 4" /><path d="M14.500 1v6H9z" fill="#5f6368" stroke="none" /></svg>
        <svg className={I + " ml-[16px]"} viewBox="0 0 16 16" fill="none" stroke="#5f6368" strokeWidth="2"><path d="M1 8 8 1.500 15 8M3.500 7v8h9V7" /></svg>
        <div className="ml-[14px] flex h-[28px] w-[1640px] shrink-0 items-center rounded-full bg-[#f1f3f4] pl-[13px]">
          <svg className="h-[12px] w-[10px] shrink-0" viewBox="0 0 10 12"><rect x=".5" y="4.500" width="9" height="7.500" rx="1" fill="#5f6368" /><path d="M2.700 5V3a2.300 2.300 0 0 1 4.600 0v2" fill="none" stroke="#5f6368" strokeWidth="1.300" /></svg>
          <Fit w={1527} className="ml-[11px] pb-px text-[14px] leading-5 text-[#6b6f74]">
            <span className="text-[#202124]">koukin.yahoo.co.jp</span>/procedure/print.html?param=c3jrx2RUWykUq3kKJT750HjEcEyadxyP1aFj7s4umSYSIkpyQLtWW0xqAWmhp1fsQ8ON8rz1P038IMAxvQHiGoEsLPJ1ZQwJINKtN3Dkso4tBO9jU5RtuW8hHfYENDdQ09NXnuYJdyVj5b0.CZOY8zcJQDg1ca...
          </Fit>
          <svg className="ml-[21px] h-[14px] w-[14px] shrink-0" viewBox="0 0 14 14" fill="none" stroke="#5f6368" strokeWidth="1.500"><circle cx="5.500" cy="5.500" r="4.500" /><path d="M9 9l4.500 4.500M3.500 5.500h4" /></svg>
          <svg className="ml-[18px] h-[15px] w-[15px] shrink-0" viewBox="0 0 24 24" fill="none" stroke="#5f6368" strokeWidth="2.200"><path d="M12 2.500l2.900 6.600 7.100.6-5.400 4.700 1.600 7L12 17.700l-6.200 3.700 1.600-7L2 9.700l7.100-.6z" /></svg>
        </div>
        <svg className={I + " ml-[14px]"} viewBox="0 0 16 16" fill="#5f6368"><path d="M1 4h4a2.200 2.200 0 1 1 4 0h4v4a2.200 2.200 0 1 1 0 4v3.500H9.500a2.200 2.200 0 1 0-4 0H1V11a2.200 2.200 0 1 0 0-3.500z" /></svg>
        <svg className={I + " ml-[16px]"} viewBox="0 0 16 16" fill="none" stroke="#5f6368" strokeWidth="1.700"><path d="M0 3h9M0 7h9M0 11h5.500M12 12V3h4" /><circle cx="10.500" cy="12" r="1.900" fill="#5f6368" stroke="none" /></svg>
        <span className="ml-[13px] flex h-[22px] w-[22px] shrink-0 items-center justify-center rounded-full bg-[#f06a00] text-[9px] leading-none text-white">貴志</span>
        <svg className={I + " ml-[13px]"} viewBox="0 0 16 16" fill="#5f6368"><circle cx="8" cy="3" r="1.600" /><circle cx="8" cy="8" r="1.600" /><circle cx="8" cy="13" r="1.600" /></svg>
      </div>
      <div className="flex h-[33px] shrink-0 items-center border-b border-[#d6d8db] pb-[2px] pl-[13px] text-[12px] leading-[18px] text-[#3c4043]">
        {BOOKMARKS.map((b) => (
          <div key={b.t} className={"flex shrink-0 items-center " + b.cell}>
            <span className={I}>{b.icon}</span>
            <Fit w={b.w} className="ml-[8.500px]">{b.t}</Fit>
          </div>
        ))}
        <svg className="ml-[53px] h-[8px] w-[9px] shrink-0" viewBox="0 0 9 8" fill="none" stroke="#4a4e52" strokeWidth="1.400"><path d="M.7.700 4 4 .7 7.300M4.700.700 8 4 4.700 7.300" /></svg>
        <span className="ml-[10px] h-4 w-px shrink-0 bg-[#c8cacd]" />
        <span className={I + " ml-[10px]"}><Folder /></span>
        <Fit w={91} className="ml-[8px]">その他のブックマーク</Fit>
      </div>
      <div className="flex flex-1 overflow-hidden">
        <div className="flex w-[1903px] flex-col pl-[793px] pt-[7px]">
          {RECORDS.map((r) => <Record key={r.id} r={r} />)}
          <div className="ml-[120px] mt-[23px] flex h-[18px] w-[78px] shrink-0 items-center justify-center rounded-[1px] bg-[#fc0] text-[10px] font-bold leading-none text-white">印刷</div>
        </div>
        <div className="flex w-[17px] flex-col items-center bg-[#f1f1f1]">
          <svg className="mt-[6px] h-1 w-[7px]" viewBox="0 0 7 4"><path d="M0 4 3.500 0 7 4z" fill="#505050" /></svg>
          <div className="mt-[208px] h-[626px] w-[13px] bg-[#c1c1c1]" />
          <svg className="mb-[7px] mt-auto h-1 w-[7px]" viewBox="0 0 7 4"><path d="M0 0h7L3.500 4z" fill="#505050" /></svg>
        </div>
      </div>
    </section>
  );
}

export default function App() {
  return (
    <main className="flex h-[1080px] w-[3840px] overflow-hidden">
      <div className="flex flex-col"><Editor /><TaskbarLeft /></div>
      <div className="flex flex-col"><Browser /><TaskbarRight /></div>
    </main>
  );
}
